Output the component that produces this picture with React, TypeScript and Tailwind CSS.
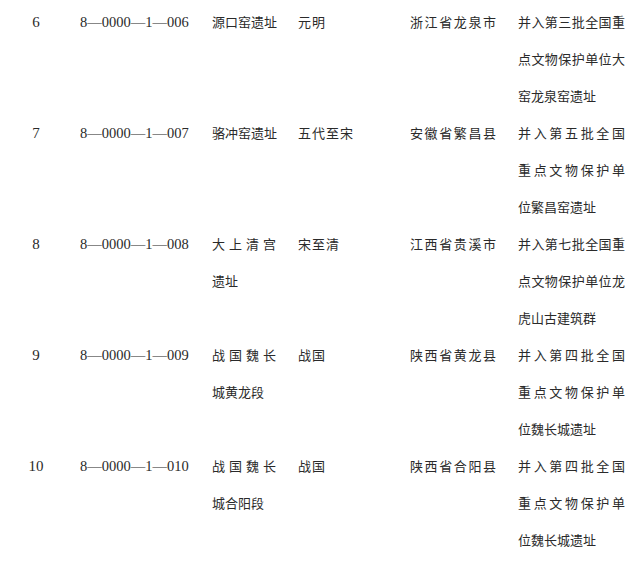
import React from "react";

type Row = {
  no: string;
  code: string;
  name: string[];
  era: string;
  place: string;
  note: string[];
};

const rows: Row[] = [
  { no: "6", code: "8—0000—1—006", name: ["源口窑遗址"], era: "元明", place: "浙江省龙泉市", note: ["并入第三批全国重", "点文物保护单位大", "窑龙泉窑遗址"] },
  { no: "7", code: "8—0000—1—007", name: ["骆冲窑遗址"], era: "五代至宋", place: "安徽省繁昌县", note: ["并入第五批全国", "重点文物保护单", "位繁昌窑遗址"] },
  { no: "8", code: "8—0000—1—008", name: ["大上清宫", "遗址"], era: "宋至清", place: "江西省贵溪市", note: ["并入第七批全国重", "点文物保护单位龙", "虎山古建筑群"] },
  { no: "9", code: "8—0000—1—009", name: ["战国魏长", "城黄龙段"], era: "战国", place: "陕西省黄龙县", note: ["并入第四批全国", "重点文物保护单", "位魏长城遗址"] },
  { no: "10", code: "8—0000—1—010", name: ["战国魏长", "城合阳段"], era: "战国", place: "陕西省合阳县", note: ["并入第四批全国", "重点文物保护单", "位魏长城遗址"] },
];

const font = "font-['Liberation_Serif','Noto_Sans_CJK_SC',serif]";

// justify a line across the cell width, except the last line of a cell
function Lines({ lines, width, justifyLast }: { lines: string[]; width: string; justifyLast?: boolean }) {
  return (
    <div className={width}>
      {lines.map((l, i) => {
        const last = i === lines.length - 1;
        const just = !last || justifyLast;
        return (
          <div
            key={i}
            className={`h-[37px] leading-[37px] whitespace-nowrap ${just ? "text-justify [text-align-last:justify]" : ""}`}
          >
            {l}
          </div>
        );
      })}
    </div>
  );
}

export default function App() {
  return (
    <div className={`w-[640px] h-[565px] bg-white text-[#2a2a2a] pt-[4px] overflow-hidden ${font}`}>
      {rows.map((r) => (
        <div key={r.no} className="flex h-[111px]">
          <div className="w-[80px] shrink-0">
            <div className="w-[72px] text-center text-[15px] h-[37px] leading-[37px]">{r.no}</div>
          </div>
          <div className="w-[132px] shrink-0 text-[14.5px] h-[37px] leading-[37px] whitespace-nowrap">{r.code}</div>
          <div className="w-[86px] shrink-0 text-[13px]">
            <Lines lines={r.name} width="w-[64px]" />
          </div>
          <div className="w-[112px] shrink-0 text-[13px] tracking-[1px] h-[37px] leading-[37px] whitespace-nowrap">{r.era}</div>
          <div className="w-[108px] shrink-0 text-[13px]">
            <Lines lines={[r.place]} width="w-[86px]" justifyLast />
          </div>
          <div className="w-[110px] shrink-0 text-[13px]">
            <Lines lines={r.note} width="w-[107px]" />
          </div>
        </div>
      ))}
    </div>
  );
}
